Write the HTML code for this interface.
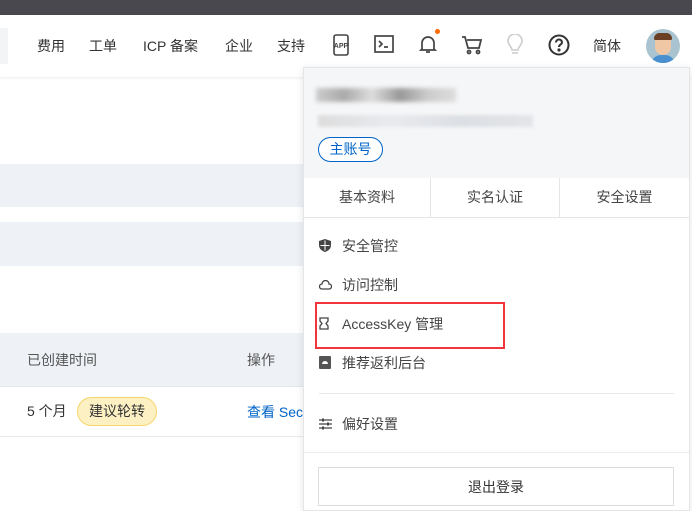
<!DOCTYPE html><html><head><meta charset="utf-8"><style>
*{margin:0;padding:0;box-sizing:border-box}
body{width:692px;height:511px;overflow:hidden;background:#fff;font-family:"Liberation Sans","Noto Sans CJK SC",sans-serif;color:#333;position:relative;font-size:14px}
.a{position:absolute}
.top{left:0;top:0;width:692px;height:15px;background:#48484e}
.nav{top:15px;left:0;width:692px;height:62px;background:#fff;box-shadow:0 1px 3px rgba(0,0,0,.08)}
.nv{top:36px;font-size:14px;color:#333}
.band{left:0;width:303px;background:#eef1f5}
.panel{left:303px;top:67px;width:387px;height:444px;background:#fff;border:1px solid #e3e5e8;box-shadow:0 2px 8px rgba(0,0,0,.1)}
.hd{left:0;top:0;width:385px;height:110px;background:#f5f6f8}
.tab{top:110px;height:40px;line-height:38px;text-align:center;font-size:14px;color:#444;border-bottom:1px solid #e5e5e5}
.mi{left:38px;font-size:14px;color:#444}
.ic{left:15px}
</style></head><body>
<div class="a top"></div>
<div class="a nav"></div>
<div class="a" style="left:0;top:28px;width:8px;height:36px;background:#f3f4f6"></div>
<div class="a nv" style="left:37px">费用</div>
<div class="a nv" style="left:89px">工单</div>
<div class="a nv" style="left:143px">ICP 备案</div>
<div class="a nv" style="left:225px">企业</div>
<div class="a nv" style="left:277px">支持</div>
<svg class="a" style="left:331px;top:34px" width="20" height="22" viewBox="0 0 20 22" fill="none" stroke="#444" stroke-width="1.6"><rect x="3" y="1" width="14" height="20" rx="2"/><text x="10" y="14" font-size="7" font-weight="bold" text-anchor="middle" fill="#444" stroke="none" font-family="Liberation Sans">APP</text></svg>
<svg class="a" style="left:374px;top:35px" width="20" height="18" viewBox="0 0 20 18" fill="none" stroke="#444" stroke-width="1.7"><rect x="1" y="1" width="18" height="16"/><path d="M5 6l3 3-3 3M10 12h4"/></svg>
<svg class="a" style="left:419px;top:33px" width="18" height="22" viewBox="0 0 18 22" fill="none" stroke="#444" stroke-width="1.7"><path d="M3 16V10a6 6 0 0112 0v6l1 1H2zM7 19h4"/></svg>
<div class="a" style="left:435px;top:29px;width:5px;height:5px;border-radius:50%;background:#ff6a00"></div>
<svg class="a" style="left:461px;top:35px" width="22" height="20" viewBox="0 0 22 20" fill="none" stroke="#444" stroke-width="1.8"><path d="M1 2h3l3 11h11l2-8H6"/><circle cx="8" cy="17" r="1.5"/><circle cx="17" cy="17" r="1.5"/></svg>
<svg class="a" style="left:507px;top:34px" width="16" height="22" viewBox="0 0 16 22" fill="none" stroke="#ccc" stroke-width="1.6"><path d="M5 16c0-3-4-5-4-9a7 7 0 0114 0c0 4-4 6-4 9zM5 19h6"/></svg>
<svg class="a" style="left:548px;top:34px" width="22" height="22" viewBox="0 0 22 22" fill="none" stroke="#333" stroke-width="2"><circle cx="11" cy="11" r="9.5"/><path d="M8 8.5a3 3 0 116 0c0 2-3 2-3 4.5"/><circle cx="11" cy="16" r=".6" fill="#333"/></svg>
<div class="a nv" style="left:593px">简体</div>
<div class="a" style="left:646px;top:29px;width:34px;height:34px;border-radius:50%;background:#a9c4d0;overflow:hidden"><div class="a" style="left:9px;top:6px;width:16px;height:20px;border-radius:8px;background:#f0c7a5"></div><div class="a" style="left:8px;top:4px;width:18px;height:7px;border-radius:8px 8px 2px 2px;background:#6b3e26"></div><div class="a" style="left:5px;top:26px;width:24px;height:10px;border-radius:10px 10px 0 0;background:#4a8fcf"></div></div>

<div class="a band" style="top:164px;height:43px"></div>
<div class="a band" style="top:222px;height:44px"></div>
<div class="a band" style="top:333px;height:54px;border-bottom:1px solid #e3e6ea"></div>
<div class="a" style="left:27px;top:350px;font-size:14px;color:#555">已创建时间</div>
<div class="a" style="left:247px;top:350px;font-size:14px;color:#555">操作</div>
<div class="a" style="left:27px;top:401px;font-size:14px;color:#333">5 个月</div>
<div class="a" style="left:77px;top:397px;width:80px;height:29px;border-radius:15px;background:#fdf1c4;border:1px solid #f5d66a;text-align:center;line-height:27px;font-size:14px;color:#333">建议轮转</div>
<div class="a" style="left:247px;top:402px;font-size:14px;color:#0064c8">查看 Sec</div>
<div class="a" style="left:0;top:436px;width:303px;height:1px;background:#e6e8eb"></div>

<div class="a panel">
<div class="a hd"></div>
<div class="a" style="left:12px;top:20px;width:140px;height:14px;background:linear-gradient(90deg,#ccc,#aaa,#ddd,#999,#ccc,#ddd);filter:blur(2px)"></div>
<div class="a" style="left:14px;top:47px;width:215px;height:12px;background:linear-gradient(90deg,#ddd,#e8eaee,#dcdfe3,#e3e5e8);filter:blur(1.5px)"></div>
<div class="a" style="left:14px;top:69px;width:65px;height:25px;border:1px solid #0064c8;border-radius:13px;text-align:center;line-height:23px;font-size:14px;color:#0064c8;background:#fff">主账号</div>
<div class="a tab" style="left:0;width:127px;border-right:1px solid #e5e5e5">基本资料</div>
<div class="a tab" style="left:127px;width:129px;border-right:1px solid #e5e5e5">实名认证</div>
<div class="a tab" style="left:256px;width:129px">安全设置</div>
<svg class="a ic" style="top:171px" width="12" height="13" viewBox="0 0 12 13"><path d="M6 0l6 2v4c0 4-3 6-6 7-3-1-6-3-6-7V2z" fill="#444"/><path d="M6 1.5v10M1.5 6.5h9" stroke="#fff" stroke-width="1"/></svg>
<div class="a mi" style="top:168px">安全管控</div>
<svg class="a ic" style="top:212px" width="13" height="10" viewBox="0 0 13 10" fill="none" stroke="#444" stroke-width="1.3"><path d="M3 9h7a2.5 2.5 0 000-5A3.5 3.5 0 003 4a2.5 2.5 0 000 5z"/></svg>
<div class="a mi" style="top:207px">访问控制</div>
<svg class="a ic" style="top:249px" width="10" height="13" viewBox="0 0 10 13" fill="none" stroke="#444" stroke-width="1.3"><path d="M1 1h8v3l-2 2.5 2 2.5v3H1V9l2-2.5L1 4z"/></svg>
<div class="a mi" style="top:246px">AccessKey 管理</div>
<svg class="a ic" style="top:288px" width="12" height="13" viewBox="0 0 12 13"><rect width="12" height="13" rx="1" fill="#555"/><path d="M3 8a3 3 0 016 0z" fill="#fff"/></svg>
<div class="a mi" style="top:285px">推荐返利后台</div>
<div class="a" style="left:15px;top:325px;width:355px;height:1px;background:#e8e8e8"></div>
<svg class="a ic" style="top:350px" width="13" height="12" viewBox="0 0 13 12" stroke="#444" stroke-width="1.3"><path d="M0 2h13M0 6h13M0 10h13"/><path d="M4 .5v3M9 4.5v3M4 8.5v3" stroke-width="2"/></svg>
<div class="a mi" style="top:346px">偏好设置</div>
<div class="a" style="left:0;top:384px;width:385px;height:1px;background:#ececec"></div>
<div class="a" style="left:14px;top:399px;width:356px;height:39px;border:1px solid #dcdcdc;text-align:center;line-height:39px;font-size:14px;color:#333">退出登录</div>
</div>
<div class="a" style="left:315px;top:302px;width:190px;height:47px;border:2px solid #f2353b"></div>
</body></html>
